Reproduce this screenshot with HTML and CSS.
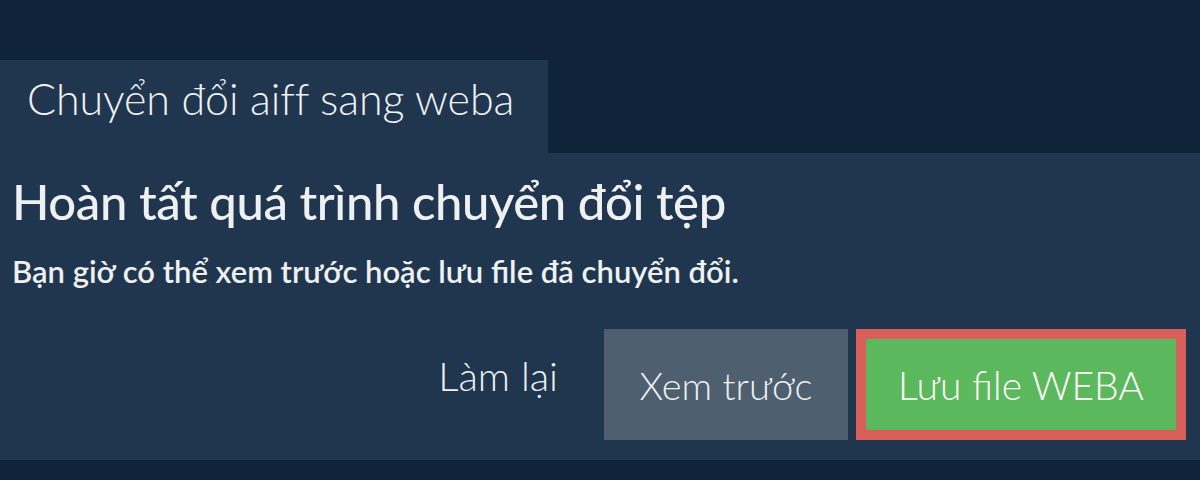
FILE: index.html
```html
<!DOCTYPE html>
<html lang="vi">
<head>
<meta charset="utf-8">
<link rel="stylesheet" href="styles.css">
</head>
<body>
<div class="page">
  <div class="tab">Chuyển đổi aiff sang weba</div>
  <div class="panel">
    <h1 class="heading">Hoàn tất quá trình chuyển đổi tệp</h1>
    <p class="sub">Bạn giờ có thể xem trước hoặc lưu file đã chuyển đổi.</p>
    <div class="actions">
      <span class="redo">Làm lại</span>
      <span class="btn preview">Xem trước</span>
      <span class="save-wrap"><span class="btn save">Lưu file WEBA</span></span>
    </div>
  </div>
</div>
</body>
</html>
```
FILE: styles.css
```css
html, body {
  margin: 0;
  padding: 0;
  background: #0f2339;
}
body {
  font-family: Lato, "Open Sans", sans-serif;
  color: #eef0f2;
}
.page {
  padding-top: 60px;
}
.tab {
  width: 548px;
  box-sizing: border-box;
  height: 93px;
  padding-left: 27px;
  padding-top: 13px;
  background: #20364f;
  font-size: 43px;
  font-weight: 300;
  line-height: 52px;
  letter-spacing: -0.1px;
}
.panel {
  background: #20364f;
  height: 307px;
  box-sizing: border-box;
  padding: 18px 14px 0 12px;
}
.heading {
  margin: 0;
  font-size: 49px;
  font-weight: 500;
  line-height: 61px;
  letter-spacing: -0.4px;
}
.sub {
  margin: 21px 0 0;
  font-size: 31px;
  font-weight: 600;
  line-height: 37px;
}
.actions {
  margin-top: 39px;
  display: flex;
  justify-content: flex-end;
  align-items: flex-start;
}
.redo {
  font-size: 40px;
  font-weight: 300;
  line-height: 48px;
  padding: 23px 46px 0 0;
}
.btn {
  display: flex;
  align-items: center;
  justify-content: center;
  font-size: 38px;
  font-weight: 300;
}
.preview {
  width: 244px;
  height: 111px;
  background: #4e5f70;
}
.save-wrap {
  margin-left: 8px;
  border: 10px solid #d9605a;
}
.save {
  width: 310px;
  height: 91px;
  background: #5cb85c;
  color: #ffffff;
  font-size: 39px;
}
```
